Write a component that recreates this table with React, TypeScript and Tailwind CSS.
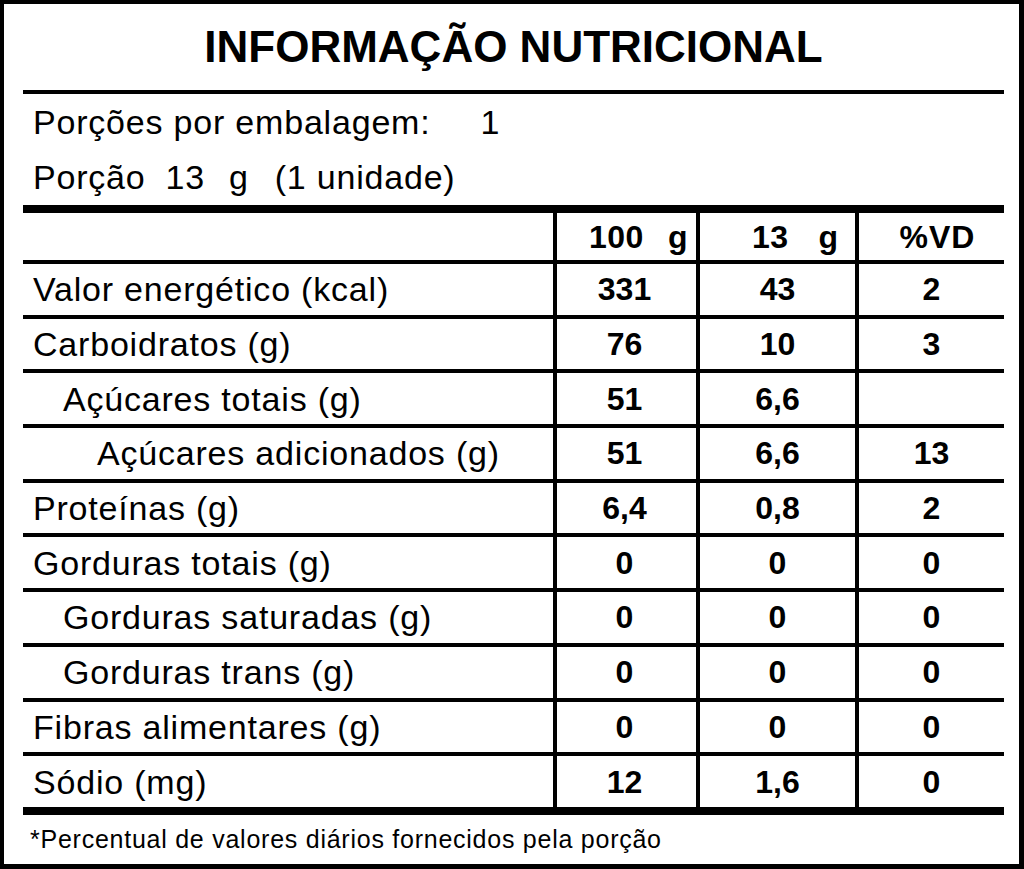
import React from 'react';

type Row = {
  label: string;
  level: 0 | 1 | 2;
  per100: string;
  perPortion: string;
  vd: string;
};

const rows: Row[] = [
  { label: 'Valor energético (kcal)', level: 0, per100: '331', perPortion: '43', vd: '2' },
  { label: 'Carboidratos (g)', level: 0, per100: '76', perPortion: '10', vd: '3' },
  { label: 'Açúcares totais (g)', level: 1, per100: '51', perPortion: '6,6', vd: '' },
  { label: 'Açúcares adicionados (g)', level: 2, per100: '51', perPortion: '6,6', vd: '13' },
  { label: 'Proteínas (g)', level: 0, per100: '6,4', perPortion: '0,8', vd: '2' },
  { label: 'Gorduras totais (g)', level: 0, per100: '0', perPortion: '0', vd: '0' },
  { label: 'Gorduras saturadas (g)', level: 1, per100: '0', perPortion: '0', vd: '0' },
  { label: 'Gorduras trans (g)', level: 1, per100: '0', perPortion: '0', vd: '0' },
  { label: 'Fibras alimentares (g)', level: 0, per100: '0', perPortion: '0', vd: '0' },
  { label: 'Sódio (mg)', level: 0, per100: '12', perPortion: '1,6', vd: '0' },
];

// recuo de cada nível de nutriente
const indent = ['pl-[10px]', 'pl-[40px]', 'pl-[74px]'];

export default function App() {
  return (
    <div className="w-[1024px] h-[869px] bg-white text-black border-black border-l-4 border-t-4 border-r-[5px] border-b-[5px] pl-[19px] pr-[15px] flex flex-col font-['Liberation_Sans',Arial,sans-serif]">
      {/* título */}
      <div className="h-[86px] flex items-center justify-center">
        <h1 className="text-[44px] leading-none font-bold">INFORMAÇÃO NUTRICIONAL</h1>
      </div>
      <div className="h-1 bg-black" />

      {/* porções */}
      <div className="h-[55.5px] flex items-center pl-[10px] text-[34px] leading-none tracking-[0.8px]">
        <span>Porções por embalagem:</span>
        <span className="ml-[50px]">1</span>
      </div>
      <div className="h-[55.5px] flex items-center pl-[10px] text-[34px] leading-none tracking-[0.8px]">
        <span>Porção</span>
        <span className="ml-[20px]">13</span>
        <span className="ml-[24px]">g</span>
        <span className="ml-[26px]">(1 unidade)</span>
      </div>
      <div className="h-2 bg-black" />

      {/* cabeçalho da tabela */}
      <div className="h-[47px] flex text-[32px] leading-none font-bold">
        <div className="w-[530px]" />
        <div className="w-[143px] border-l-4 border-black flex items-center pl-[32px] tracking-[0.5px]">
          <span>100</span>
          <span className="ml-[24px]">g</span>
        </div>
        <div className="w-[159px] border-l-4 border-black flex items-center pl-[52px] tracking-[0.5px]">
          <span>13</span>
          <span className="ml-[30px]">g</span>
        </div>
        <div className="w-[149px] border-l-4 border-black flex items-center justify-center pl-3 tracking-[1px]">
          %VD
        </div>
      </div>

      {/* linhas de nutrientes */}
      {rows.map((row) => (
        <div key={row.label} className="h-[54.7px] flex border-t-4 border-black text-[32px] leading-none">
          <div className={`w-[530px] flex items-center text-[34px] tracking-[0.8px] ${indent[row.level]}`}>
            {row.label}
          </div>
          <div className="w-[143px] border-l-4 border-black flex items-center justify-center font-bold pr-1">
            {row.per100}
          </div>
          <div className="w-[159px] border-l-4 border-black flex items-center justify-center font-bold">
            {row.perPortion}
          </div>
          <div className="w-[149px] border-l-4 border-black flex items-center justify-center font-bold">
            {row.vd}
          </div>
        </div>
      ))}
      <div className="h-2 bg-black" />

      {/* rodapé */}
      <div className="h-[49px] flex items-center pl-[7px] text-[25px] leading-none tracking-[0.75px]">
        *Percentual de valores diários fornecidos pela porção
      </div>
    </div>
  );
}
